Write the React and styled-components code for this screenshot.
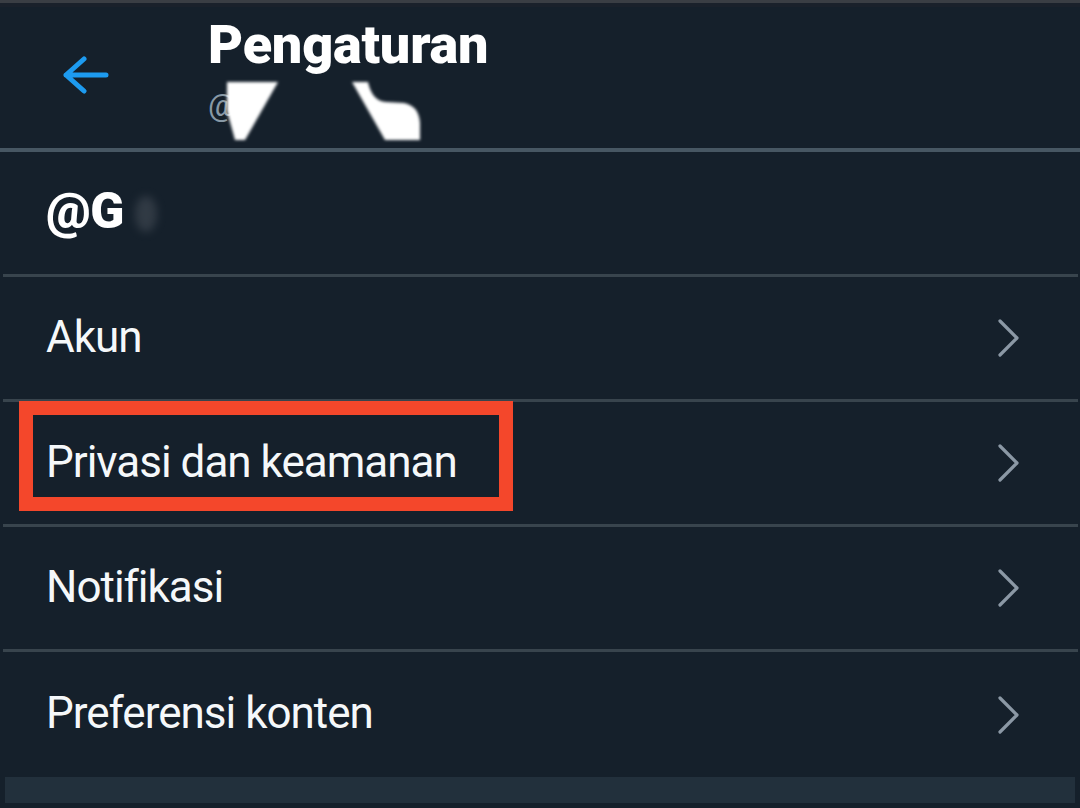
import React from "react";
import styled, { createGlobalStyle } from "styled-components";

const Global = createGlobalStyle`
  html, body { margin: 0; padding: 0; background: #15202b; }
  body { font-family: Roboto, "Liberation Sans", Arial, sans-serif; }
  * { box-sizing: border-box; }
`;

const Page = styled.div`
  width: 1080px;
  height: 808px;
  overflow: hidden;
  background: #15202b;
  display: flex;
  flex-direction: column;
  border-top: 3px solid #3a3e44;
`;

const TopShade = styled.div`
  height: 4px;
  flex: none;
  background: #1a212b;
`;

const Header = styled.header`
  position: relative;
  flex: none;
  height: 145px;
  display: flex;
  align-items: flex-start;
  padding-left: 63px;
  border-bottom: 4px solid #475763;
`;

const BackButton = styled.button`
  margin-top: 49px;
  width: 46px;
  height: 38px;
  padding: 0;
  border: 0;
  background: transparent;
  display: flex;
  align-items: center;
  justify-content: center;
  cursor: pointer;
`;

const TitleBlock = styled.div`
  margin-left: 99px;
  display: flex;
  flex-direction: column;
`;

const Title = styled.h1`
  margin: 0;
  margin-top: 7px;
  font-family: Roboto, "Liberation Sans", Arial, sans-serif;
  font-weight: 900;
  font-size: 54px;
  line-height: 62px;
  color: #ffffff;
  letter-spacing: -0.2px;
`;

const Handle = styled.div`
  margin-top: 12px;
  font-size: 31px;
  line-height: 36px;
  color: #8899a6;
`;

const Redaction = styled.svg`
  position: absolute;
  left: 218px;
  top: 64px;
`;

const AccountRow = styled.div`
  position: relative;
  flex: none;
  height: 125px;
  display: flex;
  align-items: center;
  border-bottom: 3px solid #38444d;
  margin-left: 3px;
  margin-right: 2px;
  padding-left: 43px;
`;

const AccountName = styled.div`
  font-weight: 900;
  font-size: 50px;
  line-height: 1;
  color: #ffffff;
  letter-spacing: -0.5px;
  margin-top: -4px;
`;

const Smudge = styled.span`
  position: absolute;
  left: 132px;
  top: 44px;
  width: 22px;
  height: 36px;
  border-radius: 50%;
  background: #38414b;
  filter: blur(4px);
  opacity: 0.8;
`;

const Row = styled.div`
  position: relative;
  flex: none;
  height: 125px;
  display: flex;
  align-items: center;
  justify-content: space-between;
  margin-left: 3px;
  margin-right: 2px;
  padding-left: 43px;
  padding-right: 57px;
  border-bottom: ${(p) => (p.$last ? "none" : "3px solid #38444d")};
`;

const RowLabel = styled.span`
  font-size: 44px;
  line-height: 1;
  color: #f5f8fa;
  letter-spacing: -1px;
  margin-top: -3px;
`;

const Highlight = styled.div`
  position: absolute;
  left: 16px;
  top: -1px;
  width: 494px;
  height: 110px;
  border: 14px solid #f4472b;
  pointer-events: none;
`;

const BottomBand = styled.div`
  flex: none;
  height: 26px;
  margin: 0 5px;
  background: #22303c;
`;

const Chevron = () => (
  <svg width="24" height="40" viewBox="0 0 24 40" fill="none">
    <path
      d="M3 3 L20 20 L3 37"
      stroke="#8b98a5"
      strokeWidth="3.2"
      strokeLinecap="round"
      strokeLinejoin="round"
    />
  </svg>
);

const BackArrow = () => (
  <svg width="46" height="38" viewBox="0 0 46 38" fill="none">
    <path
      d="M3 19 H43 M21 3 L3 19 L21 35"
      stroke="#1d9bf0"
      strokeWidth="5"
      strokeLinecap="round"
      strokeLinejoin="round"
    />
  </svg>
);

const items = [
  { label: "Akun" },
  { label: "Privasi dan keamanan", highlight: true },
  { label: "Notifikasi" },
  { label: "Preferensi konten", last: true },
];

export default function App() {
  return (
    <>
      <Global />
      <Page>
        <TopShade />
        <Header>
          <BackButton aria-label="Kembali">
            <BackArrow />
          </BackButton>
          <TitleBlock>
            <Title>Pengaturan</Title>
            <Handle>@</Handle>
          </TitleBlock>
          <Redaction width="210" height="76" viewBox="0 0 210 76">
            <defs>
              <filter id="soft" x="-10%" y="-10%" width="120%" height="120%">
                <feGaussianBlur stdDeviation="1.6" />
              </filter>
            </defs>
            <g fill="#ffffff" filter="url(#soft)">
              <path d="M9 11 L60 11 L27 69 L17 69 L9 40 Z" />
              <path d="M134 11 L150 11 Q154 30 168 31 L186 32 Q201 35 202 52 L202 69 L167 69 Z" />
            </g>
          </Redaction>
        </Header>
        <AccountRow>
          <AccountName>@G</AccountName>
          <Smudge />
        </AccountRow>
        {items.map((it) => (
          <Row key={it.label} $last={it.last}>
            <RowLabel>{it.label}</RowLabel>
            <Chevron />
            {it.highlight && <Highlight />}
          </Row>
        ))}
        <BottomBand />
      </Page>
    </>
  );
}
